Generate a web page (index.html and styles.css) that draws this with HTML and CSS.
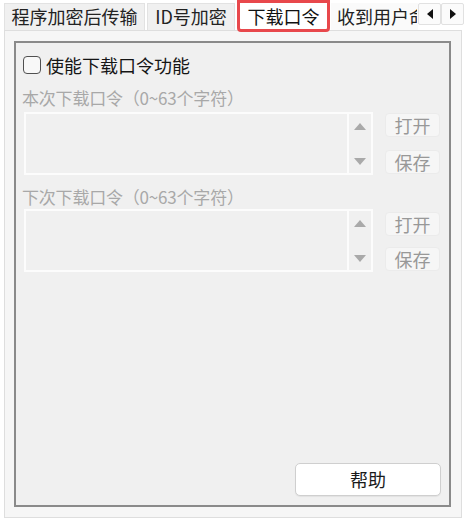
FILE: index.html
```html
<!DOCTYPE html>
<html lang="zh-CN">
<head>
<meta charset="utf-8">
<title>下载口令</title>
<link rel="stylesheet" href="styles.css">
</head>
<body>
<div class="tabbar">
  <div class="tab tab-1">程序加密后传输</div>
  <div class="tab tab-2">ID号加密</div>
  <div class="tab tab-active">下载口令</div>
  <div class="tab tab-clip">收到用户命令</div>
  <div class="arrows">
    <div class="arrow-btn"><span class="tri tri-left"></span></div>
    <div class="arrow-btn"><span class="tri tri-right"></span></div>
  </div>
</div>
<div class="page">
  <div class="group">
    <label class="check-row">
      <span class="checkbox"></span>
      <span class="check-text">使能下载口令功能</span>
    </label>
    <div class="field-label first">本次下载口令（0~63个字符）</div>
    <div class="field-row">
      <div class="textbox">
        <div class="text-area"></div>
        <div class="spin">
          <span class="spin-up"></span>
          <span class="spin-down"></span>
        </div>
      </div>
      <div class="btn-col">
        <div class="small-btn">打开</div>
        <div class="small-btn">保存</div>
      </div>
    </div>
    <div class="field-label second">下次下载口令（0~63个字符）</div>
    <div class="field-row row-2">
      <div class="textbox">
        <div class="text-area"></div>
        <div class="spin">
          <span class="spin-up"></span>
          <span class="spin-down"></span>
        </div>
      </div>
      <div class="btn-col col-2">
        <div class="small-btn">打开</div>
        <div class="small-btn">保存</div>
      </div>
    </div>
    <div class="help-btn">帮助</div>
  </div>
</div>
</body>
</html>
```

FILE: styles.css
```css
* { box-sizing: border-box; }
html, body {
  margin: 0;
  padding: 0;
  background: #ffffff;
  font-family: "Noto Sans CJK SC", "Noto Sans", sans-serif;
  color: #1e1e1e;
}
body { width: 465px; height: 521px; overflow: hidden; }

.tabbar {
  display: flex;
  align-items: flex-start;
  height: 30px;
}
.tab {
  margin-top: 3px;
  height: 27px;
  font-size: 18px;
  line-height: 25px;
  text-align: center;
  white-space: nowrap;
  background: #f0f0f0;
  border: 1px solid #e2e2e2;
  border-bottom: none;
  color: #222;
}
.tab-1 { margin-left: 4px; width: 141px; }
.tab-2 { margin-left: 2px; width: 88px; }
.tab-active {
  position: relative;
  z-index: 2;
  margin-top: 0;
  margin-left: 2px;
  width: 93px;
  height: 32px;
  margin-bottom: -2px;
  border: 3px solid #e8484c;
  border-radius: 0 0 4px 4px;
  background: #ffffff;
  line-height: 26px;
  color: #111;
}
.tab-clip {
  margin-left: 1px;
  flex: 1;
  min-width: 0;
  overflow: hidden;
  text-align: left;
  padding-left: 5px;
  background: #fafafa;
  border-color: transparent;
}
.arrows {
  display: flex;
  margin-top: 3px;
  margin-right: 1px;
}
.arrow-btn {
  width: 23px;
  height: 22px;
  background: #fbfbfb;
  border: 1px solid #e1e1e1;
  border-radius: 2px;
  display: flex;
  align-items: center;
  justify-content: center;
}
.tri { width: 0; height: 0; border-top: 5px solid transparent; border-bottom: 5px solid transparent; }
.tri-left { border-right: 6px solid #111; }
.tri-right { border-left: 6px solid #111; }

.page {
  margin-left: 4px;
  width: 458px;
  height: 488px;
  background: #f6f6f6;
  border: 1px solid #dedede;
  padding: 10px 10px 10px 9px;
}
.group {
  height: 100%;
  background: #f0f0f0;
  border: 2px solid #8a8a8a;
  display: flex;
  flex-direction: column;
  padding: 10px 9px 9px 6px;
}
.check-row {
  display: flex;
  align-items: center;
  height: 24px;
  padding-left: 1px;
}
.checkbox {
  width: 18px;
  height: 18px;
  border: 1.5px solid #505050;
  border-radius: 4px;
  background: #f8f8f8;
}
.check-text {
  margin-left: 5px;
  font-size: 18px;
  line-height: 24px;
  color: #151515;
}
.field-label {
  font-size: 17px;
  line-height: 22px;
  color: #a8a8a8;
  white-space: nowrap;
  letter-spacing: -0.2px;
}
.field-label.first { margin-top: 10px; }
.field-label.second { margin-top: 11px; }
.field-row {
  display: flex;
  margin-top: 3px;
  padding-left: 2px;
}
.field-row.row-2 { margin-top: 1px; }
.textbox {
  width: 349px;
  height: 63px;
  border: 2px solid #fcfcfc;
  display: flex;
}
.text-area { flex: 1; }
.spin {
  width: 24px;
  border-left: 2px solid #fcfcfc;
  display: flex;
  flex-direction: column;
  justify-content: space-between;
  align-items: center;
  padding: 9px 0 8px;
}
.spin-up, .spin-down {
  width: 0;
  height: 0;
  border-left: 6px solid transparent;
  border-right: 6px solid transparent;
}
.spin-up { border-bottom: 7px solid #a9a9a9; }
.spin-down { border-top: 7px solid #a9a9a9; }
.btn-col {
  margin-left: 12px;
  width: 55px;
  display: flex;
  flex-direction: column;
  justify-content: space-between;
  padding: 1px 0 1px;
}
.btn-col.col-2 { padding: 3px 0 1px; }
.small-btn {
  height: 24px;
  background: #f6f6f6;
  border: 1px solid #ebebeb;
  border-radius: 4px;
  font-size: 18px;
  line-height: 22px;
  text-align: center;
  color: #989898;
}
.help-btn {
  margin-top: auto;
  align-self: flex-end;
  width: 146px;
  height: 33px;
  margin-right: -1px;
  background: #ffffff;
  border: 1px solid #cfcfcf;
  border-radius: 5px;
  font-size: 18px;
  line-height: 31px;
  text-align: center;
  color: #1a1a1a;
  box-shadow: 0 1px 1px rgba(0,0,0,0.06);
}
```
